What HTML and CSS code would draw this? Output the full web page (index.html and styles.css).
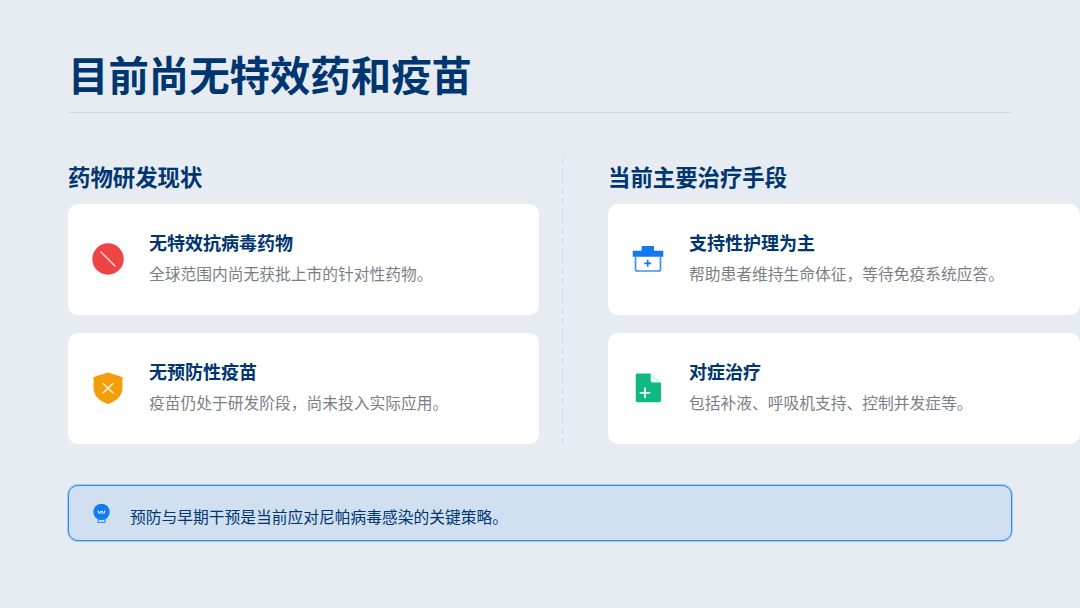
FILE: index.html
```html
<!DOCTYPE html>
<html lang="zh-CN">
<head>
<meta charset="utf-8">
<title>目前尚无特效药和疫苗</title>
<link rel="stylesheet" href="styles.css">
</head>
<body>
<main class="slide">
  <header class="head"><h1>目前尚无特效药和疫苗</h1></header>
  <section class="cols">
    <div class="col">
      <h2>药物研发现状</h2>
      <div class="cards">
        <article class="card">
          <svg class="icon" viewBox="0 0 32 32"><circle cx="16" cy="16" r="15.700" fill="#ef4444"/><path d="M9 9L23 23" stroke="#fbe3e3" stroke-width="1.400" stroke-linecap="round"/></svg>
          <div class="text"><h3>无特效抗病毒药物</h3><p>全球范围内尚无获批上市的针对性药物。</p></div>
        </article>
        <article class="card">
          <svg class="icon" viewBox="0 0 32 32"><path d="M16 0.500L30.500 5V16C30.500 24 24 29.500 16 32C8 29.500 1.500 24 1.500 16V5Z" fill="#f59e0b"/><path d="M11 11.500L21 21M21 11.500L11 21" stroke="#fdf3e0" stroke-width="1.500" stroke-linecap="round"/></svg>
          <div class="text"><h3>无预防性疫苗</h3><p>疫苗仍处于研发阶段，尚未投入实际应用。</p></div>
        </article>
      </div>
    </div>
    <div class="divider"></div>
    <div class="col">
      <h2>当前主要治疗手段</h2>
      <div class="cards">
        <article class="card">
          <svg class="icon" viewBox="0 0 32 32"><path d="M9.700 3H22V7.700H31.300V13.700H0.700V7.700H9.700Z" fill="#1677f2"/><path d="M3.500 13V26C3.500 27.500 4.300 28 5.500 28H26.500C27.700 28 28.500 27.500 28.500 26V13" fill="none" stroke="#3f8ef3" stroke-width="1.700"/><path d="M15.700 16.800V23.800M12.200 20.300H19.200" stroke="#1677f2" stroke-width="1.700"/></svg>
          <div class="text"><h3>支持性护理为主</h3><p>帮助患者维持生命体征，等待免疫系统应答。</p></div>
        </article>
        <article class="card">
          <svg class="icon" viewBox="0 0 32 32"><path d="M5.500 1.500H18.700L29 11V28.200C29 29.700 28.200 30.200 27 30.200H5.500C4.200 30.200 3.700 29.500 3.700 28.200V3.500C3.700 2 4.400 1.500 5.500 1.500Z" fill="#10b981"/><path d="M18.700 1.500L29 10.500H20.700C19.400 10.500 18.700 9.800 18.700 8.500Z" fill="#e2f7ef"/><path d="M13 15.500V26.100M7.700 20.800H18.300" stroke="#eafaf4" stroke-width="1.800"/></svg>
          <div class="text"><h3>对症治疗</h3><p>包括补液、呼吸机支持、控制并发症等。</p></div>
        </article>
      </div>
    </div>
  </section>
  <aside class="note">
    <svg class="note-icon" viewBox="0 0 17 19"><path d="M5 14.500H12V18.400H5Z" fill="#d6e6f7" stroke="#3f8ef3" stroke-width="1.200"/><circle cx="8.500" cy="8" r="8.200" fill="#0f7bf5"/><path d="M5 6.500L5.800 9H11.200L12 6.500M7 7.500H10" fill="none" stroke="#e6f1fe" stroke-width="1.100"/></svg>
    <p>预防与早期干预是当前应对尼帕病毒感染的关键策略。</p>
  </aside>
</main>
</body>
</html>
```
FILE: styles.css
```css
* { box-sizing: border-box; }
html, body { margin: 0; padding: 0; }
body {
  width: 1080px;
  height: 608px;
  overflow: hidden;
  background: #e6ecf2;
  font-family: "Noto Sans CJK SC", "Noto Sans", sans-serif;
}
.slide {
  width: 1080px;
  height: 608px;
  padding: 44px 68px 0;
  display: flex;
  flex-direction: column;
}
.head {
  height: 69px;
  border-bottom: 1px solid #d3d8df;
}
h1 {
  margin: 0;
  font-size: 40.400px;
  line-height: 60px;
  font-weight: 700;
  color: #003670;
}
.cols {
  margin-top: 45px;
  display: grid;
  grid-template-columns: 471px 69px 472px;
}
.col { display: flex; flex-direction: column; }
h2 {
  margin: 0 0 9px;
  font-size: 22.400px;
  line-height: 37px;
  font-weight: 700;
  color: #003670;
}
.cards { display: flex; flex-direction: column; gap: 18.500px; }
.card {
  height: 110.500px;
  background: #fff;
  border-radius: 10px;
  display: flex;
  align-items: center;
  padding-left: 24px;
  gap: 25px;
}
.icon { width: 32px; height: 32px; flex: none; }
.text { margin-top: -4px; }
h3 {
  margin: 0 0 5px;
  font-size: 18px;
  line-height: 27px;
  font-weight: 700;
  color: #003670;
}
.card p {
  margin: 0;
  font-size: 15.750px;
  line-height: 25px;
  color: #7a7f87;
}
.divider {
  width: 1px;
  height: 289px;
  margin-left: 23px;
  background: repeating-linear-gradient(to bottom, #cdd5e2 0, #cdd5e2 6px, transparent 6px, transparent 10px);
}
.note {
  margin-top: 38px;
  width: 944px;
  height: 56px;
  background: #d0e0f1;
  border: 1px solid #2f8bea;
  box-shadow: 0 0 0 1px rgba(47, 139, 234, 0.35);
  border-radius: 10px;
  display: flex;
  align-items: center;
  padding-left: 24px;
  gap: 20px;
}
.note-icon { width: 17px; height: 19px; flex: none; }
.note p {
  margin: 6px 0 0;
  font-size: 15.750px;
  line-height: 25px;
  color: #003670;
}
```
